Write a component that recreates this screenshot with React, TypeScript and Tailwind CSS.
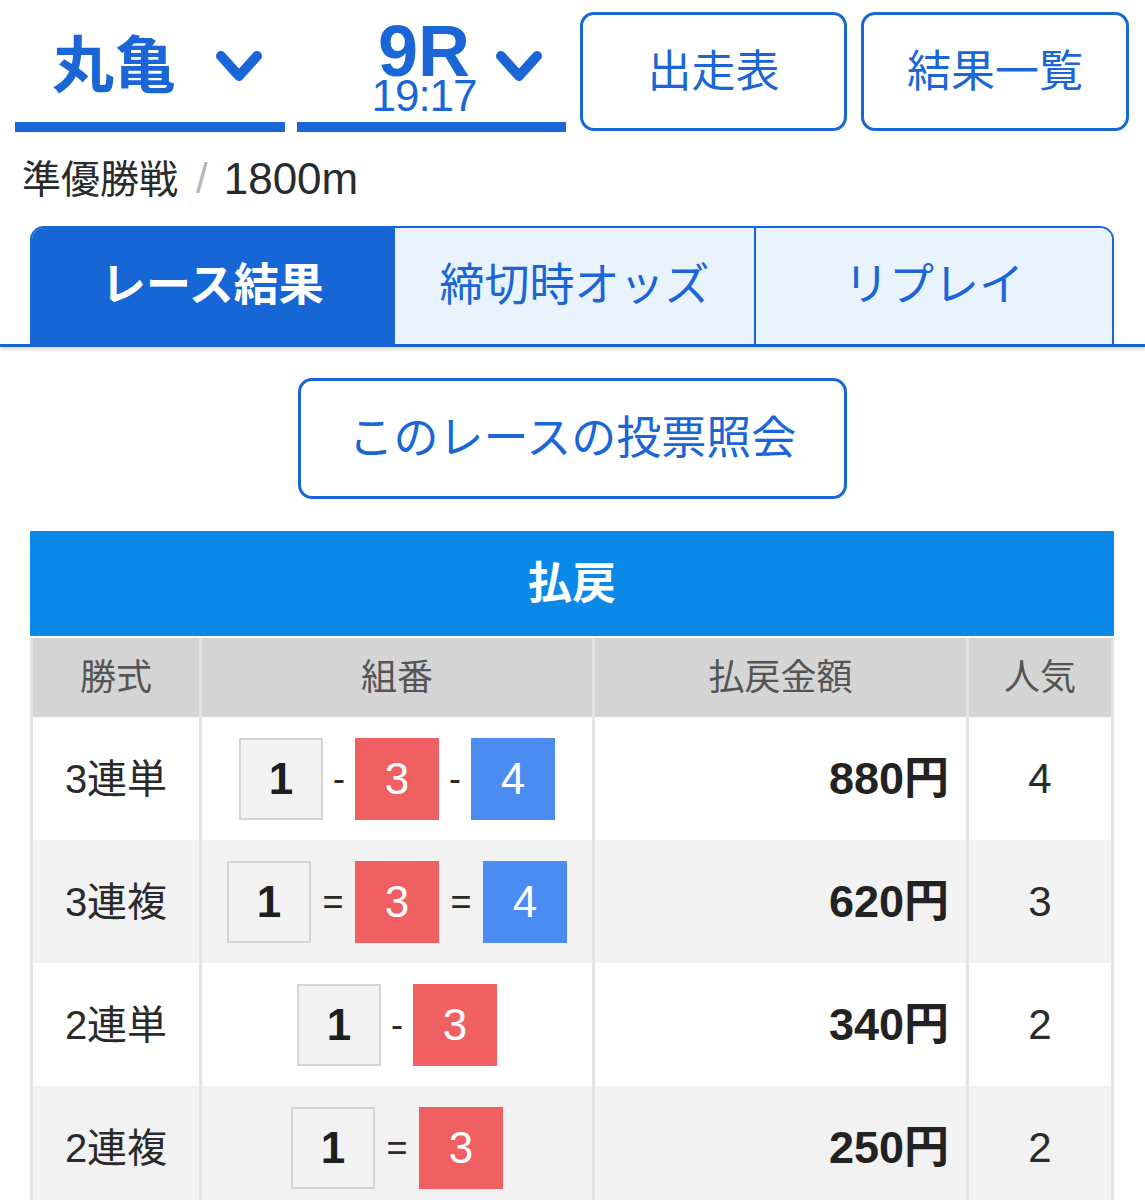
import React from 'react';

type Box = { n: number; color: 'white' | 'red' | 'blue' };

type Row = {
  kind: string;
  boxes: Box[];
  sep: '-' | '=';
  amount: string;
  rank: number;
};

const rows: Row[] = [
  { kind: '3連単', boxes: [{ n: 1, color: 'white' }, { n: 3, color: 'red' }, { n: 4, color: 'blue' }], sep: '-', amount: '880円', rank: 4 },
  { kind: '3連複', boxes: [{ n: 1, color: 'white' }, { n: 3, color: 'red' }, { n: 4, color: 'blue' }], sep: '=', amount: '620円', rank: 3 },
  { kind: '2連単', boxes: [{ n: 1, color: 'white' }, { n: 3, color: 'red' }], sep: '-', amount: '340円', rank: 2 },
  { kind: '2連複', boxes: [{ n: 1, color: 'white' }, { n: 3, color: 'red' }], sep: '=', amount: '250円', rank: 2 },
];

const Chevron: React.FC = () => (
  <svg width="46" height="34" viewBox="0 0 46 34" className="shrink-0">
    <polyline points="5,6 23,26 41,6" fill="none" stroke="#1a66d6" strokeWidth="10" strokeLinecap="round" strokeLinejoin="round" />
  </svg>
);

const NumBox: React.FC<{ box: Box }> = ({ box }) => {
  if (box.color === 'white') {
    return (
      <div className="w-[84px] h-[82px] flex items-center justify-center bg-[#f2f2f2] border-2 border-[#d4d4d4] text-[44px] font-bold text-[#1e1e1e]">
        {box.n}
      </div>
    );
  }
  const bg = box.color === 'red' ? 'bg-[#f05f61]' : 'bg-[#4a8cf0]';
  return (
    <div className={`w-[84px] h-[82px] flex items-center justify-center ${bg} text-[44px] font-medium text-white`}>
      {box.n}
    </div>
  );
};

export default function App() {
  return (
    <div className="w-[1145px] h-[1200px] overflow-hidden bg-white font-['Liberation_Sans','Noto_Sans_CJK_JP',sans-serif]">
      {/* top selectors + buttons */}
      <div className="flex items-start pl-[15px] pt-[12px]">
        <div className="w-[270px] h-[120px] border-b-[10px] border-[#1a66d6] flex items-center pl-[37px] gap-[40px]">
          <span className="text-[62px] font-bold text-[#1a66d6] leading-none">丸亀</span>
          <Chevron />
        </div>
        <div className="ml-[12px] w-[269px] h-[120px] border-b-[10px] border-[#1a66d6] flex items-center pl-[73px] gap-[18px]">
          <div className="flex flex-col items-center w-[108px] mt-[4px]">
            <span className="text-[72px] font-bold text-[#1a66d6] leading-[54px]">9R</span>
            <span className="text-[44px] text-[#1a66d6] leading-[36px] tracking-[-1px]">19:17</span>
          </div>
          <Chevron />
        </div>
        <button className="ml-[14px] w-[267px] h-[119px] rounded-[14px] border-[3px] border-[#1a66d6] text-[44px] text-[#1a66d6] flex items-center justify-center">
          出走表
        </button>
        <button className="ml-[14px] w-[268px] h-[119px] rounded-[14px] border-[3px] border-[#1a66d6] text-[44px] text-[#1a66d6] flex items-center justify-center">
          結果一覧
        </button>
      </div>

      {/* race info */}
      <div className="pl-[22px] mt-[22px] h-[50px] flex items-center text-[39px] text-[#2a2a2a] leading-none">
        <span>準優勝戦</span>
        <span className="ml-[18px] mr-[16px] text-[#b8b8b8] font-light text-[42px]">/</span>
        <span className="text-[44px]">1800m</span>
      </div>

      {/* tabs */}
      <div className="mt-[22px] border-b-[3px] border-[#1a66d6] shadow-[0_3px_3px_rgba(0,0,0,0.12)]">
        <div className="ml-[30px] w-[1084px] h-[118px] flex rounded-t-[14px] border-2 border-b-0 border-[#1a66d6] overflow-hidden">
          <div className="w-[361px] bg-[#1766d6] flex items-center justify-center text-[45px] font-bold text-white">
            レース結果
          </div>
          <div className="w-[361px] bg-[#e9f3fd] border-l-2 border-[#1a66d6] flex items-center justify-center text-[45px] text-[#1a66d6]">
            締切時オッズ
          </div>
          <div className="flex-1 bg-[#e9f3fd] border-l-2 border-[#1a66d6] flex items-center justify-center text-[45px] text-[#1a66d6]">
            リプレイ
          </div>
        </div>
      </div>

      {/* vote inquiry */}
      <div className="flex justify-center mt-[31px]">
        <button className="w-[549px] h-[121px] rounded-[14px] border-[3px] border-[#1a66d6] text-[45px] text-[#1a66d6] flex items-center justify-center">
          このレースの投票照会
        </button>
      </div>

      {/* payout table */}
      <div className="ml-[30px] w-[1084px] mt-[32px]">
        <div className="h-[105px] bg-[#0b89e8] flex items-center justify-center text-[44px] font-bold text-white">
          払戻
        </div>
        <div className="mt-[2px] grid grid-cols-[169px_393px_374px_148px] h-[79px] bg-[#d5d5d5] text-[36px] text-[#555]">
          <div className="border-l-[3px] border-[#e4e4e4] flex items-center justify-center">勝式</div>
          <div className="border-l-[3px] border-[#e4e4e4] flex items-center justify-center">組番</div>
          <div className="border-l-[3px] border-[#e4e4e4] flex items-center justify-center">払戻金額</div>
          <div className="border-x-[3px] border-[#e4e4e4] flex items-center justify-center">人気</div>
        </div>
        {rows.map((r, i) => (
          <div
            key={r.kind}
            className={`grid grid-cols-[169px_393px_374px_148px] h-[123px] ${i % 2 === 0 ? 'bg-white' : 'bg-[#f2f2f2]'}`}
          >
            <div className="border-l-[3px] border-[#e4e4e4] flex items-center justify-center text-[40px] text-[#2a2a2a]">
              {r.kind}
            </div>
            <div className="border-l-[3px] border-[#e4e4e4] flex items-center justify-center gap-[10px]">
              {r.boxes.map((b, j) => (
                <React.Fragment key={j}>
                  {j > 0 && (
                    <span className={`text-[36px] text-[#2a2a2a] ${r.sep === '=' ? 'w-[24px]' : 'w-[12px]'} text-center`}>
                      {r.sep}
                    </span>
                  )}
                  <NumBox box={b} />
                </React.Fragment>
              ))}
            </div>
            <div className="border-l-[3px] border-[#e4e4e4] flex items-center justify-end pr-[17px] text-[45px] font-bold text-[#222]">
              {r.amount}
            </div>
            <div className="border-x-[3px] border-[#e4e4e4] flex items-center justify-center text-[42px] text-[#2a2a2a]">
              {r.rank}
            </div>
          </div>
        ))}
      </div>
    </div>
  );
}
